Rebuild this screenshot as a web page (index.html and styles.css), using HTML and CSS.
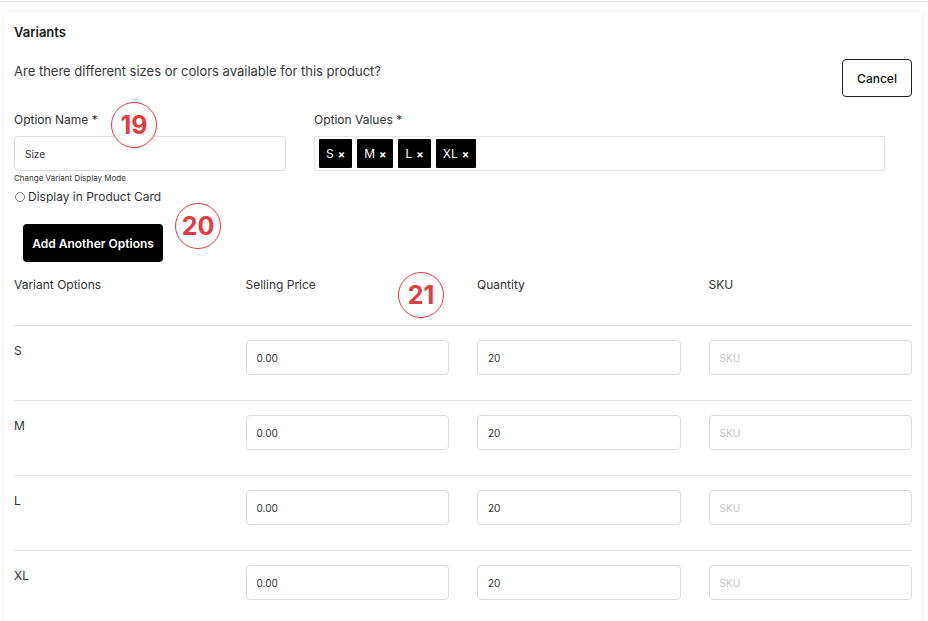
FILE: index.html
```html
<!DOCTYPE html>
<html lang="en">
<head>
    <meta charset="UTF-8">
    <meta name="viewport" content="width=device-width, initial-scale=1.0">
    <title>Variants</title>
    <link rel="stylesheet" href="styles.css">
</head>
<body>
    <div class="topline"></div>
    <div class="card">
        <h3 class="title">Variants</h3>

        <div class="head">
            <p class="subtitle">Are there different sizes or colors available for this product?</p>
            <button class="cancel-btn">Cancel</button>
        </div>

        <div class="options">
            <div class="field">
                <label>Option Name *</label>
                <input type="text" class="text-input" value="Size">
                <div class="hint">Change Variant Display Mode</div>
                <label class="radio-line"><input type="radio"> Display in Product Card</label>
            </div>
            <div class="field">
                <label>Option Values *</label>
                <div class="chips">
                    <span class="chip">S <b>×</b></span>
                    <span class="chip">M <b>×</b></span>
                    <span class="chip">L <b>×</b></span>
                    <span class="chip">XL <b>×</b></span>
                </div>
            </div>
        </div>

        <button class="add-btn">Add Another Options</button>

        <div class="table">
            <div class="row header">
                <div>Variant Options</div>
                <div>Selling Price</div>
                <div>Quantity</div>
                <div>SKU</div>
            </div>
            <div class="row">
                <div class="variant">S</div>
                <input type="text" class="text-input" value="0.00">
                <input type="text" class="text-input" value="20">
                <input type="text" class="text-input" placeholder="SKU">
            </div>
            <div class="row">
                <div class="variant">M</div>
                <input type="text" class="text-input" value="0.00">
                <input type="text" class="text-input" value="20">
                <input type="text" class="text-input" placeholder="SKU">
            </div>
            <div class="row">
                <div class="variant">L</div>
                <input type="text" class="text-input" value="0.00">
                <input type="text" class="text-input" value="20">
                <input type="text" class="text-input" placeholder="SKU">
            </div>
            <div class="row">
                <div class="variant">XL</div>
                <input type="text" class="text-input" value="0.00">
                <input type="text" class="text-input" value="20">
                <input type="text" class="text-input" placeholder="SKU">
            </div>
        </div>

        <!-- annotation markers -->
        <span class="marker m19">19</span>
        <span class="marker m20">20</span>
        <span class="marker m21">21</span>
    </div>
</body>
</html>
```

FILE: styles.css
```css
* {
    box-sizing: border-box;
    margin: 0;
    padding: 0;
}
body {
    font-family: 'Inter', 'Liberation Sans', sans-serif;
    background-color: #fff;
    color: #2b2b2b;
    overflow: hidden;
}
.topline {
    margin-top: 1px;
    height: 1px;
    background-color: #e6e6e6;
}
.card {
    position: relative;
    margin: 10px 6px 0 4px;
    padding: 10px 10px 0 10px;
    background-color: #fff;
    box-shadow: 0 0 4px rgba(0, 0, 0, 0.07);
}
.title {
    font-size: 13px;
    font-weight: 600;
    line-height: 20px;
    color: #1a1a1a;
}
.head {
    display: flex;
    justify-content: space-between;
    align-items: flex-start;
    margin-top: 17px;
}
.subtitle {
    font-size: 13px;
    line-height: 18px;
    padding-top: 3px;
    color: #383838;
}
.cancel-btn {
    width: 70px;
    height: 38px;
    background-color: #fff;
    border: 1px solid #222;
    border-radius: 4px;
    font-family: inherit;
    font-size: 12px;
    font-weight: 500;
    color: #111;
    cursor: pointer;
}
.options {
    display: grid;
    grid-template-columns: 272px 571px;
    gap: 28px;
    margin-top: 15px;
}
.field label {
    display: block;
    font-size: 12px;
    line-height: 16px;
    margin-bottom: 8px;
    color: #333;
}
.text-input {
    display: block;
    width: 100%;
    height: 35px;
    padding: 0 10px;
    border: 1px solid #dcdcdc;
    border-radius: 4px;
    font-family: inherit;
    font-size: 10px;
    color: #333;
    background-color: #fff;
    outline: none;
}
.text-input::placeholder {
    color: #c6c6c6;
}
.hint {
    font-size: 8px;
    line-height: 10px;
    margin-top: 2px;
    color: #333;
}
.field .radio-line {
    display: flex;
    align-items: center;
    gap: 3px;
    margin-top: 6px;
    margin-bottom: 0;
    font-size: 12px;
    line-height: 16px;
}
.radio-line input {
    width: 10px;
    height: 10px;
    margin: 0 0 0 1px;
}
.chips {
    display: flex;
    gap: 5px;
    height: 35px;
    padding: 2px 4px;
    border: 1px solid #e4e4e4;
    border-radius: 2px;
}
.chip {
    display: flex;
    align-items: center;
    gap: 4px;
    height: 29px;
    padding: 0 7px;
    background-color: #000;
    color: #fff;
    font-size: 12px;
    border-radius: 1px;
}
.chip b {
    font-size: 11px;
}
.add-btn {
    display: block;
    width: 140px;
    height: 38px;
    margin: 19px 0 0 9px;
    background-color: #000;
    color: #fff;
    border: none;
    border-radius: 4px;
    font-family: inherit;
    font-size: 12px;
    font-weight: 600;
    cursor: pointer;
}
.table {
    margin-top: 15px;
}
.row {
    display: grid;
    grid-template-columns: repeat(4, 1fr);
    gap: 28px;
    padding: 14px 0 25px;
    border-bottom: 1px solid #e6e6e6;
    font-size: 12px;
    line-height: 16px;
}
.row:last-child {
    border-bottom: none;
}
.row.header {
    padding: 0 0 32px;
    color: #333;
}
.variant {
    padding-top: 3px;
    font-size: 12px;
    color: #333;
}
.marker {
    position: absolute;
    width: 46px;
    height: 46px;
    display: flex;
    justify-content: center;
    align-items: center;
    border: 1.5px solid #e53a3f;
    border-radius: 50%;
    background-color: #fff;
    color: #e53a3f;
    font-size: 25px;
    font-weight: 700;
}
.m19 {
    left: 107px;
    top: 90px;
}
.m20 {
    left: 171px;
    top: 191px;
}
.m21 {
    left: 394px;
    top: 260px;
}
```
